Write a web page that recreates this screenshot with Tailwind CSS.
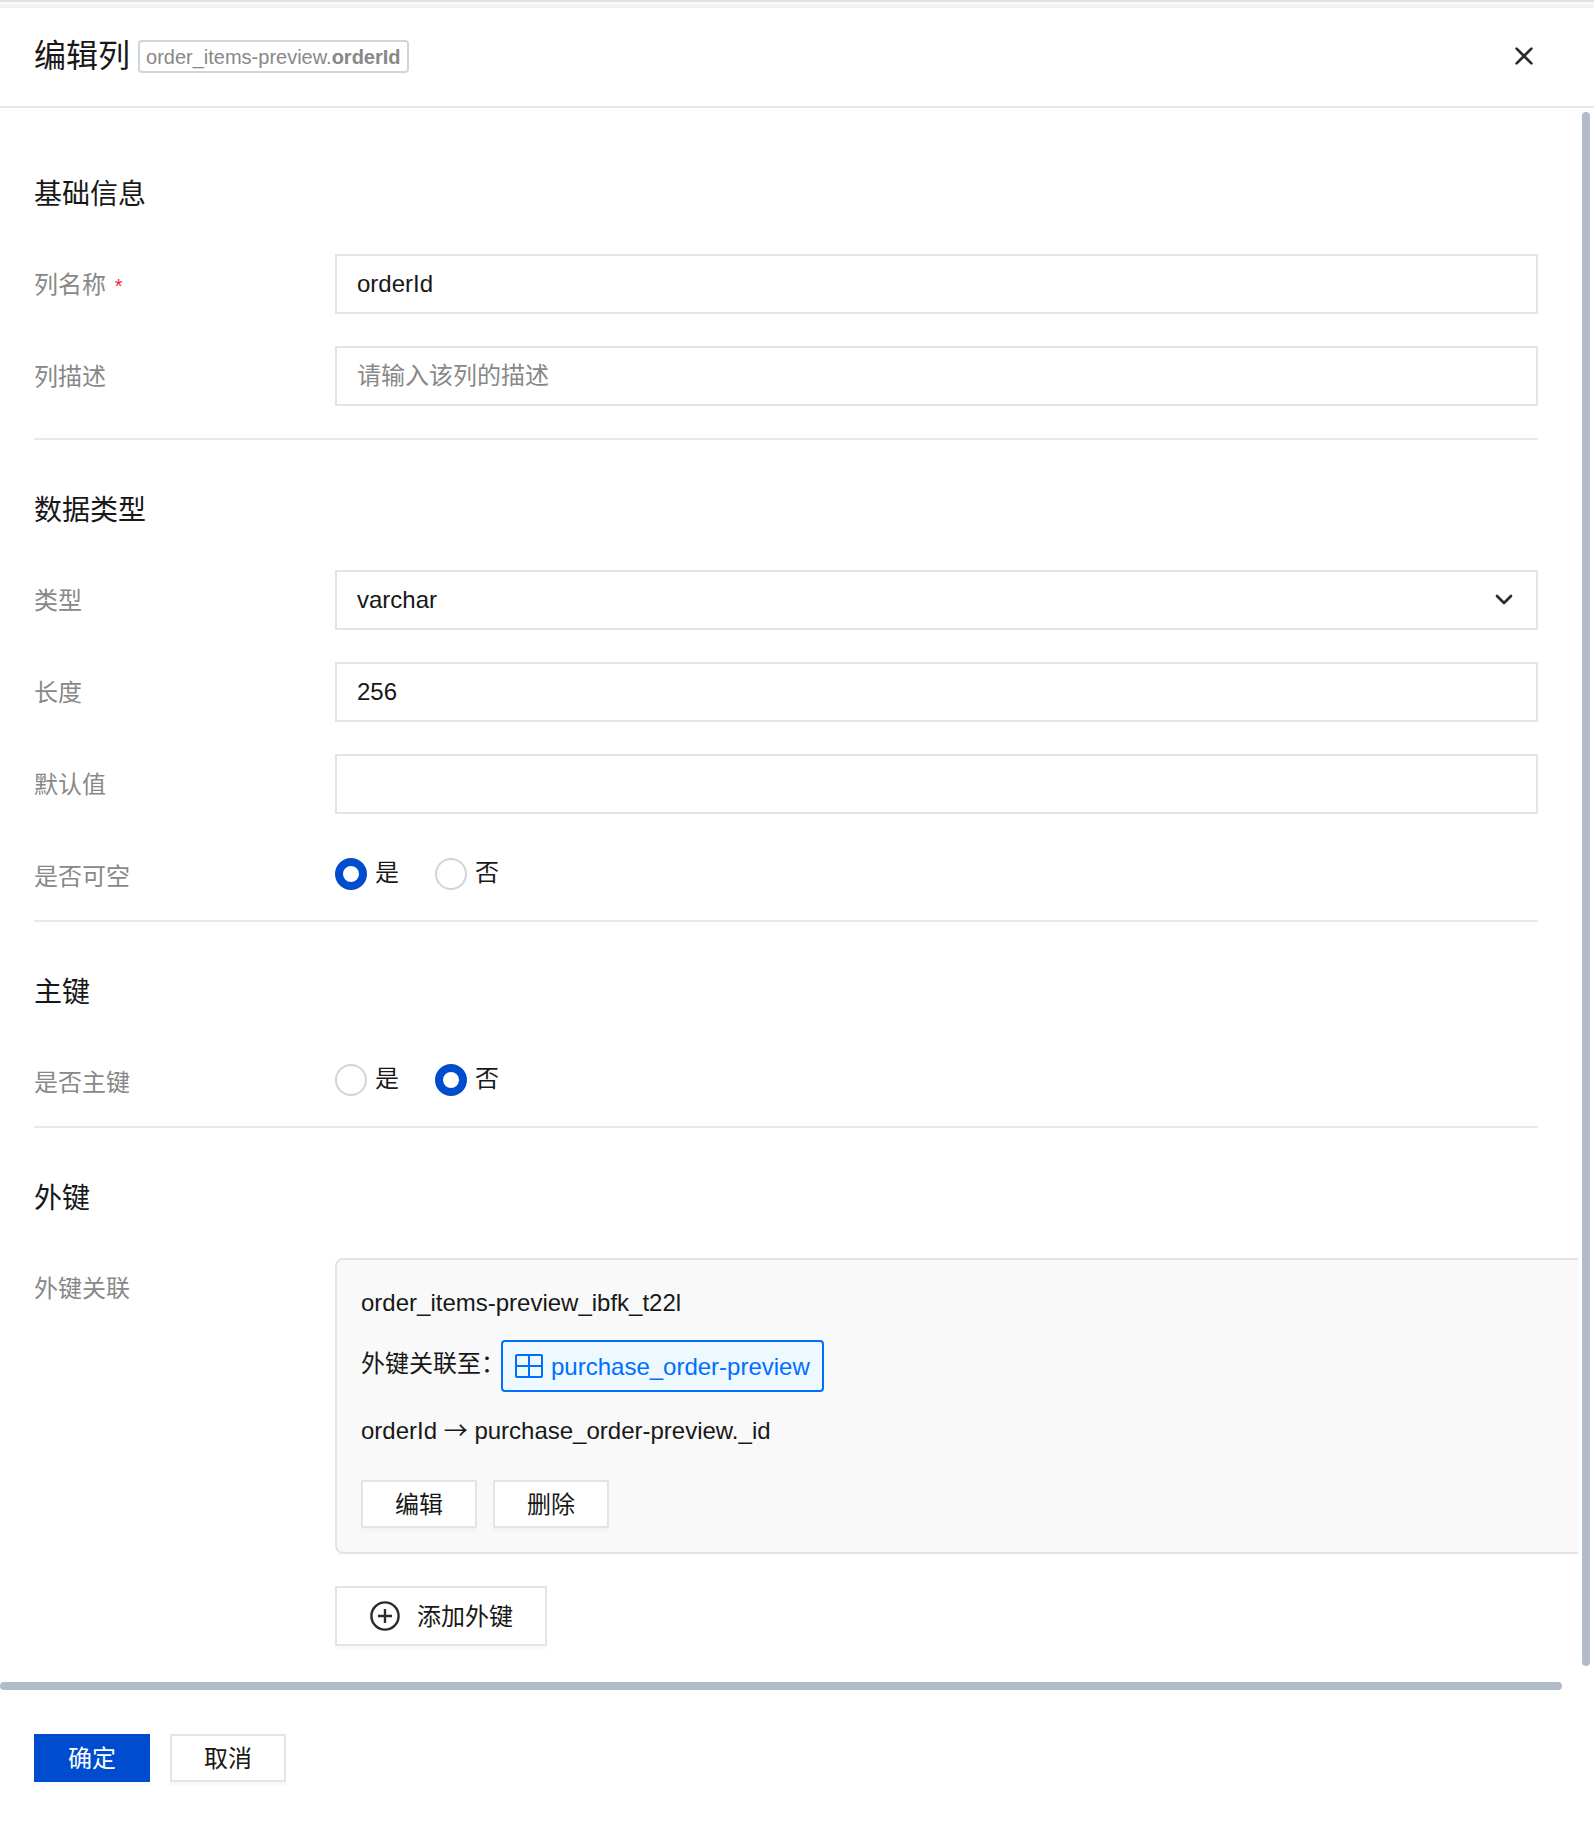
<!DOCTYPE html>
<html lang="zh-CN">

<head>
  <meta charset="UTF-8">
  <meta name="viewport" content="width=device-width, initial-scale=1.0">
  <title>编辑列</title>
  <script src="https://cdn.jsdelivr.net/npm/@tailwindcss/browser@4"></script>
</head>

<body class="bg-white text-[#181818] text-2xl font-['Liberation_Sans','Noto_Sans_CJK_SC',sans-serif]">
  <div class="h-2 border-t-2 border-[#dfe3e8] bg-linear-to-b from-[#fafafa] to-[#f0f0f6]"></div>

  <header class="flex items-center justify-between border-b-2 border-[#e5e8ef] pt-6 pb-[26px] pl-[34px] pr-14">
    <div class="flex items-center gap-2">
      <h1 class="text-[32px] leading-12">编辑列</h1>
      <span class="rounded border-2 border-[#cfd5e0] px-1.5 pt-px text-xl leading-7 text-[#888]">order_items-preview.<b>orderId</b></span>
    </div>
    <button type="button" aria-label="关闭" class="flex h-7 w-7 items-center justify-center">
      <svg class="h-5 w-5" viewBox="0 0 20 20" fill="none" stroke="#2b2b2b" stroke-width="2.7" stroke-linecap="round">
        <path d="M2.6 2.6l14.8 14.8M17.4 2.6L2.6 17.4"></path>
      </svg>
    </button>
  </header>

  <main>
    <div class="flex">
      <form class="min-w-0 flex-1 overflow-hidden pt-4 pb-9 pl-[34px] pr-10">
        <!-- 基础信息 -->
        <section class="border-b-2 border-[#e5e9ee] pt-[51px] pb-8">
          <h2 class="mb-[39px] text-[28px] leading-10">基础信息</h2>
          <div class="flex flex-col gap-8">
            <div class="flex">
              <label for="name" class="w-[301px] shrink-0 pt-[11px] leading-10 text-[#888]">列名称 <span class="ml-0.5 text-xl text-[#f5222d]">*</span></label>
              <input id="name" type="text" value="orderId" class="h-[60px] min-w-0 flex-1 border-2 border-[#e1e4eb] px-5">
            </div>
            <div class="flex">
              <label for="desc" class="w-[301px] shrink-0 pt-[11px] leading-10 text-[#888]">列描述</label>
              <input id="desc" type="text" placeholder="请输入该列的描述" class="h-[60px] min-w-0 flex-1 border-2 border-[#e1e4eb] px-5 placeholder:text-[#888]">
            </div>
          </div>
        </section>

        <!-- 数据类型 -->
        <section class="border-b-2 border-[#e5e9ee] pt-[51px] pb-[23px]">
          <h2 class="mb-[39px] text-[28px] leading-10">数据类型</h2>
          <div class="flex flex-col gap-8">
            <div class="flex">
              <label for="type" class="w-[301px] shrink-0 pt-[11px] leading-10 text-[#888]">类型</label>
              <div class="relative flex-1">
                <select id="type" class="block h-[60px] w-full appearance-none border-2 border-[#e1e4eb] bg-white px-5">
                  <option>varchar</option>
                </select>
                <svg class="pointer-events-none absolute top-5 right-6 h-5 w-5" viewBox="0 0 20 20" fill="none" stroke="#2b2b2b" stroke-width="2.7" stroke-linecap="round" stroke-linejoin="round">
                  <path d="M3 6l7 7 7-7"></path>
                </svg>
              </div>
            </div>
            <div class="flex">
              <label for="length" class="w-[301px] shrink-0 pt-[11px] leading-10 text-[#888]">长度</label>
              <input id="length" type="text" value="256" class="h-[60px] min-w-0 flex-1 border-2 border-[#e1e4eb] px-5">
            </div>
            <div class="flex">
              <label for="default" class="w-[301px] shrink-0 pt-[11px] leading-10 text-[#888]">默认值</label>
              <input id="default" type="text" class="h-[60px] min-w-0 flex-1 border-2 border-[#e1e4eb] px-5">
            </div>
            <div class="flex" role="radiogroup" aria-labelledby="nullable">
              <span id="nullable" class="w-[301px] shrink-0 pt-[11px] leading-10 text-[#888]">是否可空</span>
              <div class="flex items-start gap-9 pt-3">
                <label class="flex items-center gap-2">
                  <input type="radio" name="nullable" checked class="h-8 w-8 appearance-none rounded-full border-2 border-[#cfd5de] checked:border-8 checked:border-[#004ccf]">
                  <span class="leading-7 pb-0.5">是</span>
                </label>
                <label class="flex items-center gap-2">
                  <input type="radio" name="nullable" class="h-8 w-8 appearance-none rounded-full border-2 border-[#cfd5de] checked:border-8 checked:border-[#004ccf]">
                  <span class="leading-7 pb-0.5">否</span>
                </label>
              </div>
            </div>
          </div>
        </section>

        <!-- 主键 -->
        <section class="border-b-2 border-[#e5e9ee] pt-[51px] pb-[23px]">
          <h2 class="mb-[39px] text-[28px] leading-10">主键</h2>
          <div class="flex" role="radiogroup" aria-labelledby="primary">
            <span id="primary" class="w-[301px] shrink-0 pt-[11px] leading-10 text-[#888]">是否主键</span>
            <div class="flex items-start gap-9 pt-3">
              <label class="flex items-center gap-2">
                <input type="radio" name="primary" class="h-8 w-8 appearance-none rounded-full border-2 border-[#cfd5de] checked:border-8 checked:border-[#004ccf]">
                <span class="leading-7 pb-0.5">是</span>
              </label>
              <label class="flex items-center gap-2">
                <input type="radio" name="primary" checked class="h-8 w-8 appearance-none rounded-full border-2 border-[#cfd5de] checked:border-8 checked:border-[#004ccf]">
                <span class="leading-7 pb-0.5">否</span>
              </label>
            </div>
          </div>
        </section>

        <!-- 外键 -->
        <section class="pt-[51px]">
          <h2 class="mb-[39px] text-[28px] leading-10">外键</h2>
          <div class="flex">
            <span class="w-[301px] shrink-0 pt-[11px] leading-10 text-[#888]">外键关联</span>
            <div class="min-w-0 flex-1">
              <div class="-mr-14 rounded-lg border-2 border-[#e3e3e3] bg-[#f9f9f9] p-6">
                <p class="leading-[38px]">order_items-preview_ibfk_t22l</p>
                <div class="mt-[18px] flex items-center">
                  <span class="w-[140px] whitespace-nowrap pb-1">外键关联至：</span>
                  <a href="#" class="flex h-[52px] items-center gap-2 rounded border-2 border-[#006eff] bg-[#edf9ff] px-3 text-[#006eff]">
                    <svg class="h-6 w-7" viewBox="0 0 28 24" fill="none" stroke="currentColor" stroke-width="2">
                      <rect x="1" y="1" width="26" height="22" rx="1"></rect>
                      <path d="M14 1v22M1 12h26"></path>
                    </svg>
                    <span class="pt-0.5">purchase_order-preview</span>
                  </a>
                </div>
                <p class="mt-5 leading-[38px]">orderId <span class="leading-none font-['Noto_Sans_CJK_SC']">→</span> purchase_order-preview._id</p>
                <div class="mt-[30px] flex gap-4">
                  <button type="button" class="h-12 w-[116px] border-2 border-[#e1e4eb] bg-white pt-0.5 leading-10 shadow-[0_4px_0_rgba(0,0,0,0.02)]">编辑</button>
                  <button type="button" class="h-12 w-[116px] border-2 border-[#e1e4eb] bg-white pt-0.5 leading-10 shadow-[0_4px_0_rgba(0,0,0,0.02)]">删除</button>
                </div>
              </div>
              <button type="button" class="mt-8 flex h-[60px] items-center gap-4 border-2 border-[#e1e4eb] bg-white px-8 shadow-[0_4px_0_rgba(0,0,0,0.02)]">
                <svg class="h-8 w-8" viewBox="0 0 32 32" fill="none" stroke="#2b2b2b" stroke-width="2.4">
                  <circle cx="16" cy="16" r="13.6"></circle>
                  <path d="M16 9v14M9 16h14"></path>
                </svg>
                <span class="pt-0.5">添加外键</span>
              </button>
            </div>
          </div>
        </section>
      </form>
      <div class="mx-1 mt-1 mb-4 w-2 rounded-full bg-[#b1bcc9]"></div>
    </div>
    <div class="mr-8 h-2 rounded-full bg-[#b1bcc9]"></div>
  </main>

  <footer class="flex gap-5 px-[34px] pt-11 pb-10">
    <button type="button" class="h-12 w-[116px] bg-[#004ccf] pt-0.5 leading-10 text-white shadow-[0_4px_0_rgba(0,0,0,0.02)]">确定</button>
    <button type="button" class="h-12 w-[116px] border-2 border-[#e1e4eb] bg-white pt-0.5 leading-10 shadow-[0_4px_0_rgba(0,0,0,0.02)]">取消</button>
  </footer>
</body>

</html>
